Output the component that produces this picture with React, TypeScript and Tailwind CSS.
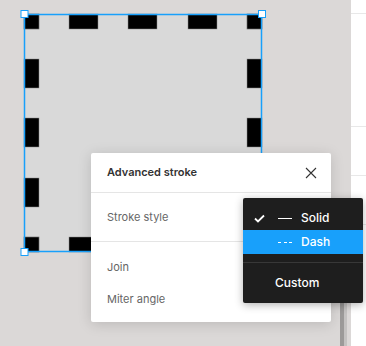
import React from 'react'

const font = { fontFamily: 'Inter, "Noto Sans", sans-serif' }

function DashedShape() {
  const side = [24, 69, 128, 188, 247]
  const len = [15, 29, 29, 29, 15]
  return (
    <svg className="absolute left-0 top-0" width="300" height="270" viewBox="0 0 300 270">
      <rect x="24" y="14" width="238" height="238" fill="#d9d9d9" />
      {side.map((p, i) => (
        <g key={i} fill="#000" stroke="#8a8a8a" strokeWidth="0.5">
          <rect x={p} y="14" width={len[i]} height="15" />
          <rect x={p} y="237" width={len[i]} height="15" />
          <rect x="24" y={p - 10} width="15" height={len[i]} />
          <rect x="247" y={p - 10} width="15" height={len[i]} />
        </g>
      ))}
      <rect x="24.5" y="14.5" width="237" height="237" fill="none" stroke="#18a0fb" strokeWidth="1.5" />
      <rect x="21" y="10.5" width="7" height="7" fill="#fff" stroke="#18a0fb" strokeWidth="1" />
      <rect x="258.5" y="10.5" width="7" height="7" fill="#fff" stroke="#18a0fb" strokeWidth="1" />
      <rect x="21" y="248.5" width="7" height="7" fill="#fff" stroke="#18a0fb" strokeWidth="1" />
    </svg>
  )
}

function StrokeMenu() {
  return (
    <div className="absolute left-[243px] top-[198px] w-[120px] rounded-[2px] bg-[#1e1e1e] py-2 text-[12px] font-medium text-white shadow-[0_2px_8px_rgba(0,0,0,0.3)]">
      <div className="flex h-6 items-center">
        <svg className="ml-[11px]" width="11" height="9" viewBox="0 0 11 9">
          <path d="M1 4.5 L4 7.5 L10 1.5" fill="none" stroke="#fff" strokeWidth="1.8" />
        </svg>
        <span className="ml-[13px] h-px w-[14px] bg-white" />
        <span className="ml-[9px]">Solid</span>
      </div>
      <div className="flex h-6 items-center bg-[#18a0fb]">
        <span className="ml-[35px] flex w-[14px] justify-between">
          <span className="h-px w-[3px] bg-white" />
          <span className="h-px w-[3px] bg-white" />
          <span className="h-px w-[3px] bg-white" />
        </span>
        <span className="ml-[9px]">Dash</span>
      </div>
      <div className="my-2 h-px bg-[#383838]" />
      <div className="flex h-6 items-center pl-[32px]">Custom</div>
    </div>
  )
}

export default function App() {
  return (
    <div className="relative flex h-[346px] w-[366px] overflow-hidden bg-[#dbd8d7]" style={font}>
      <div className="relative flex-1">
        <DashedShape />
        <div className="absolute left-[340px] top-[302px] flex h-[44px] w-[7px]">
          <div className="w-[4px] bg-[#9c9a99]" />
          <div className="w-[3px] bg-[#c4c2c1]" />
        </div>
      </div>
      <div className="flex w-[15px] flex-col bg-white">
        <div className="h-[14px] border-b border-[#e8e8e8]" />
        <div className="h-[113px] border-b border-[#e8e8e8]" />
        <div className="h-[49px] border-b border-[#e8e8e8]" />
        <div className="h-[49px] border-b border-[#e8e8e8]" />
      </div>

      <div className="absolute left-[91px] top-[153px] w-[240px] rounded-[2px] bg-white text-[11px] shadow-[0_2px_14px_rgba(0,0,0,0.15)]">
        <div className="flex h-[40px] items-center justify-between border-b border-[#e5e5e5] pl-4 pr-[14px]">
          <span className="font-semibold text-[#333]">Advanced stroke</span>
          <svg width="12" height="12" viewBox="0 0 12 12">
            <path d="M1 1 L11 11 M11 1 L1 11" stroke="#333" strokeWidth="1.1" />
          </svg>
        </div>
        <div className="flex h-[49px] items-center border-b border-[#e5e5e5] pl-4 text-[#666]">Stroke style</div>
        <div className="flex flex-col pt-[9px] pb-[7px] pl-4 text-[#666]">
          <div className="flex h-[32px] items-center">Join</div>
          <div className="flex h-[32px] items-center">Miter angle</div>
        </div>
      </div>

      <StrokeMenu />
    </div>
  )
}
